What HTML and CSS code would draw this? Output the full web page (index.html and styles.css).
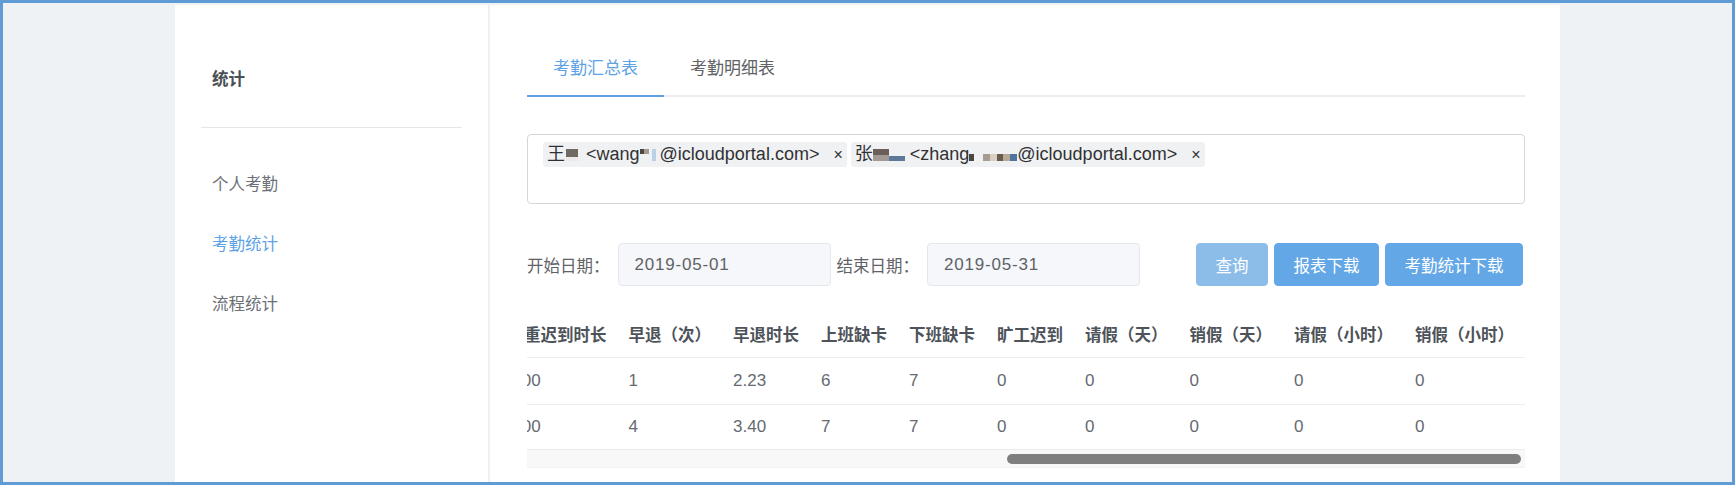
FILE: index.html
```html
<!DOCTYPE html>
<html lang="zh-CN">
<head>
<meta charset="utf-8">
<title>考勤统计</title>
<link rel="stylesheet" href="styles.css">
</head>
<body>
<div class="frame">
  <div class="panel">
    <aside class="sidebar">
      <div class="side-title">统计</div>
      <div class="side-divider"></div>
      <ul class="side-menu">
        <li>个人考勤</li>
        <li class="active">考勤统计</li>
        <li>流程统计</li>
      </ul>
    </aside>
    <main class="content">
      <div class="tabs">
        <div class="tab active">考勤汇总表</div>
        <div class="tab">考勤明细表</div>
      </div>

      <div class="recipients">
        <span class="tag">王<i class="mz mz-a"></i> &lt;wang<i class="mz mz-b"></i>@icloudportal.com&gt;<span class="close">×</span></span>
        <span class="tag">张<i class="mz mz-c"></i> &lt;zhang<i class="mz mz-d"></i><i class="mz mz-e"></i>@icloudportal.com&gt;<span class="close">×</span></span>
      </div>

      <div class="filters">
        <label class="f-label">开始日期：</label>
        <div class="date-input">2019-05-01</div>
        <label class="f-label">结束日期：</label>
        <div class="date-input">2019-05-31</div>
        <div class="spacer"></div>
        <div class="btns">
          <button class="btn disabled">查询</button>
          <button class="btn">报表下载</button>
          <button class="btn">考勤统计下载</button>
        </div>
      </div>

      <div class="table-wrap">
        <table class="stats">
          <thead>
            <tr>
              <th>严重迟到时长</th>
              <th>早退（次）</th><th>早退时长</th><th>上班缺卡</th><th>下班缺卡</th><th>旷工迟到</th>
              <th>请假（天）</th><th>销假（天）</th><th>请假（小时）</th><th>销假（小时）</th>
            </tr>
          </thead>
          <tbody>
            <tr>
              <td>0.00</td>
              <td>1</td><td>2.23</td><td>6</td><td>7</td><td>0</td>
              <td>0</td><td>0</td><td>0</td><td>0</td>
            </tr>
            <tr>
              <td>0.00</td>
              <td>4</td><td>3.40</td><td>7</td><td>7</td><td>0</td>
              <td>0</td><td>0</td><td>0</td><td>0</td>
            </tr>
          </tbody>
        </table>
      </div>
      <div class="hscroll"><div class="hscroll-thumb"></div></div>
    </main>
  </div>
</div>
</body>
</html>
```

FILE: styles.css
```css
html, body {
  margin: 0;
  padding: 0;
  height: 100%;
}

body {
  font-family: "Liberation Sans", "Noto Sans CJK SC", sans-serif;
  font-size: 16.5px;
  background: #eef2f4;
  color: #606266;
}

.frame {
  box-sizing: border-box;
  height: 485px;
  border: 3px solid #5f9bd5;
  padding-top: 2px;
  display: flex;
  justify-content: center;
  overflow: hidden;
}

.panel {
  width: 1385px;
  height: 100%;
  background: #fff;
  display: flex;
}

/* ---------- sidebar ---------- */
.sidebar {
  box-sizing: border-box;
  width: 315px;
  flex: none;
  border-right: 2px solid #eef1f3;
  padding: 62px 26px 0;
}

.side-title {
  padding-left: 11px;
  line-height: 24px;
  font-weight: 700;
  color: #4a4f56;
}

.side-divider {
  height: 1px;
  background: #e4e7ea;
  margin-top: 36px;
}

.side-menu {
  list-style: none;
  margin: 26px 0 0;
  padding: 0;
}

.side-menu li {
  padding-left: 11px;
  height: 60px;
  line-height: 60px;
  color: #6c7077;
}

.side-menu li.active {
  color: #5ea2e6;
}

/* ---------- content ---------- */
.content {
  flex: 1;
  min-width: 0;
  padding: 52px 35px 0 37px;
}

.tabs {
  display: flex;
  border-bottom: 2px solid #e9edf1;
}

.tab {
  font-size: 17px;
  line-height: 24px;
  padding: 0 26px 14px;
  margin-bottom: -2px;
  border-bottom: 2px solid transparent;
  color: #606266;
}

.tab.active {
  color: #5ea2e6;
  border-bottom-color: #5ea2e6;
}

.recipients {
  box-sizing: border-box;
  margin-top: 37px;
  height: 70px;
  border: 1px solid #d3d7dc;
  border-radius: 4px;
  padding: 7px 15px;
  display: flex;
  align-items: flex-start;
  gap: 4px;
}

.tag {
  display: inline-flex;
  align-items: center;
  height: 25px;
  line-height: 25px;
  padding: 0 4px 0 4px;
  background: #f0f1f3;
  border-radius: 3px;
  font-size: 18px;
  color: #303133;
  white-space: pre;
}

.tag .close {
  margin-left: 14px;
  font-size: 16px;
  color: #333;
}

.mz {
  display: inline-block;
  height: 12px;
  align-self: center;
}

.mz-a {
  width: 12px;
  margin-left: 1px;
  margin-right: 3px;
  background:
    linear-gradient(to bottom, #6f6962 0 70%, #ece9e6 70%);
}

.mz-b {
  width: 20px;
  background:
    linear-gradient(to bottom, transparent 0 40%, #f0f1f3 40%) 0 0 / 45% 100% no-repeat,
    linear-gradient(to right, #4e453e 0 22%, #a39a92 22% 45%, #f0f1f3 45% 60%, #b9d0e6 60% 78%, #f0f1f3 78%);
}

.mz-c {
  width: 32px;
  background:
    linear-gradient(to bottom, #6b5f57 0 50%, #a29a94 50%) 0 0 / 50% 100% no-repeat,
    linear-gradient(to bottom, #f0f1f3 0 60%, #5d7898 60%) 0 0 / 100% 100% no-repeat;
}

.mz-d {
  width: 5px;
  margin-right: 9px;
  background: linear-gradient(to bottom, #f0f1f3 0 40%, #4b4640 40%);
}

.mz-e {
  width: 34px;
  background:
    linear-gradient(to bottom, #f0f1f3 0 40%, transparent 40%),
    linear-gradient(to right, #a79c90 0 22%, #d8cfc5 22% 40%, #6a5c4c 40% 58%, #b8a894 58% 78%, #4f74a0 78%);
}

/* ---------- filters ---------- */
.filters {
  margin-top: 39px;
  height: 43px;
  display: flex;
  align-items: center;
}

.f-label {
  color: #5f6368;
  margin-right: 8px;
  white-space: nowrap;
}

.date-input {
  box-sizing: border-box;
  width: 213px;
  height: 43px;
  margin-right: 6px;
  padding-left: 16px;
  display: flex;
  align-items: center;
  background: #f5f7fa;
  border: 1px solid #e4e7ed;
  border-radius: 4px;
  font-size: 17px;
  letter-spacing: 0.8px;
  color: #606266;
}

.spacer {
  flex: 1;
}

.btns {
  display: flex;
  gap: 6px;
  margin-right: 2px;
}

.btn {
  height: 43px;
  padding: 0 18.5px;
  border: 1px solid #63a7e6;
  border-radius: 4px;
  background: #63a7e6;
  color: #fff;
  font-family: inherit;
  font-size: 16.5px;
}

.btn.disabled {
  background: #8cbde9;
  border-color: #8cbde9;
}

/* ---------- table ---------- */
.table-wrap {
  margin-top: 25px;
  overflow: hidden;
  direction: rtl;
}

.stats {
  direction: ltr;
  border-collapse: collapse;
  white-space: nowrap;
}

.stats th,
.stats td {
  padding: 0 11px;
  text-align: left;
  border-bottom: 1px solid #e9edf2;
  height: 46px;
}

.stats tbody tr:last-child td {
  height: 44px;
}

.stats th {
  font-weight: 700;
  color: #4e535a;
}

.stats td {
  font-size: 17px;
  color: #666a70;
}

.hscroll {
  box-sizing: border-box;
  height: 18px;
  padding: 0 4px;
  background: #f8f8f8;
  border-bottom: 1px solid #f1f1f1;
  display: flex;
  justify-content: flex-end;
  align-items: center;
}

.hscroll-thumb {
  width: 514px;
  height: 10px;
  border-radius: 5px;
  background: #7f7f7f;
}
```
